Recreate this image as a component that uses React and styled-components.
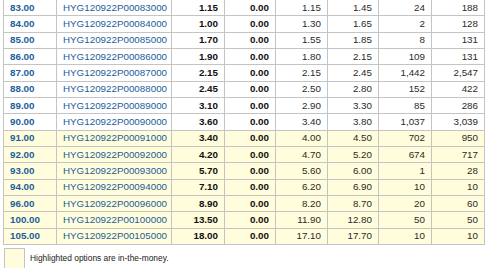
import React from 'react'
import styled, { createGlobalStyle } from 'styled-components'

const rows = [
  ['83.00', 'HYG120922P00083000', '1.15', '0.00', '1.15', '1.45', '24', '188', false],
  ['84.00', 'HYG120922P00084000', '1.00', '0.00', '1.30', '1.65', '2', '128', false],
  ['85.00', 'HYG120922P00085000', '1.70', '0.00', '1.55', '1.85', '8', '131', false],
  ['86.00', 'HYG120922P00086000', '1.90', '0.00', '1.80', '2.15', '109', '131', false],
  ['87.00', 'HYG120922P00087000', '2.15', '0.00', '2.15', '2.45', '1,442', '2,547', false],
  ['88.00', 'HYG120922P00088000', '2.45', '0.00', '2.50', '2.80', '152', '422', false],
  ['89.00', 'HYG120922P00089000', '3.10', '0.00', '2.90', '3.30', '85', '286', false],
  ['90.00', 'HYG120922P00090000', '3.60', '0.00', '3.40', '3.80', '1,037', '3,039', false],
  ['91.00', 'HYG120922P00091000', '3.40', '0.00', '4.00', '4.50', '702', '950', true],
  ['92.00', 'HYG120922P00092000', '4.20', '0.00', '4.70', '5.20', '674', '717', true],
  ['93.00', 'HYG120922P00093000', '5.70', '0.00', '5.60', '6.00', '1', '28', true],
  ['94.00', 'HYG120922P00094000', '7.10', '0.00', '6.20', '6.90', '10', '10', true],
  ['96.00', 'HYG120922P00096000', '8.90', '0.00', '8.20', '8.70', '20', '60', true],
  ['100.00', 'HYG120922P00100000', '13.50', '0.00', '11.90', '12.80', '50', '50', true],
  ['105.00', 'HYG120922P00105000', '18.00', '0.00', '17.10', '17.70', '10', '10', true],
]

const GlobalStyle = createGlobalStyle`
  body {
    margin: 0;
    background: #fff;
    font-family: "Liberation Sans", Arial, sans-serif;
  }
`

const Page = styled.div`
  padding-left: 3px;
  margin-top: -1px;
`

const Chain = styled.table`
  border-collapse: collapse;
  table-layout: fixed;
  width: 482px;
  font-size: 9.8px;
`

const Row = styled.tr`
  height: 16.33px;
  background: ${p => (p.$itm ? '#fffddc' : '#fff')};
`

const Cell = styled.td`
  border: 1px solid #c4c4c4;
  padding: 0 6px;
  text-align: ${p => (p.$left ? 'left' : 'right')};
  font-weight: ${p => (p.$bold ? 'bold' : 'normal')};
  color: ${p => (p.$link ? '#1c5d9b' : p.$bold ? '#111' : '#2a2a2a')};
  white-space: nowrap;
  overflow: hidden;
  line-height: 14px;
`

const Legend = styled.div`
  display: flex;
  align-items: center;
  gap: 5px;
  margin-top: 3px;
  padding-left: 1px;
  font-size: 8.4px;
  color: #222;
`

const Swatch = styled.span`
  width: 19px;
  height: 19px;
  border: 1px solid #c4c4c4;
  background: #fffddc;
`

const widths = [53, 115, 53, 51, 52, 51, 53, 53]

const App = () => {
  return (
    <Page>
      <GlobalStyle />
      <Chain>
        <colgroup>
          {widths.map((w, i) => (
            <col key={i} style={{ width: w }} />
          ))}
        </colgroup>
        <tbody>
          {rows.map(r => (
            <Row key={r[1]} $itm={r[8]}>
              <Cell $left $bold $link>{r[0]}</Cell>
              <Cell $left $link>{r[1]}</Cell>
              <Cell $bold>{r[2]}</Cell>
              <Cell $bold>{r[3]}</Cell>
              <Cell>{r[4]}</Cell>
              <Cell>{r[5]}</Cell>
              <Cell>{r[6]}</Cell>
              <Cell>{r[7]}</Cell>
            </Row>
          ))}
        </tbody>
      </Chain>
      <Legend>
        <Swatch />
        Highlighted options are in-the-money.
      </Legend>
    </Page>
  )
}

export default App
